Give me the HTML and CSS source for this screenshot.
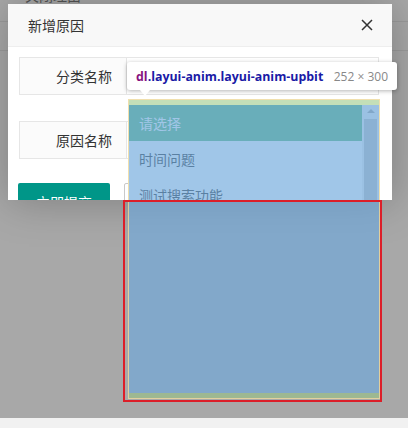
FILE: index.html
```html
<!DOCTYPE html>
<html lang="zh">
<head>
<meta charset="utf-8">
<title>新增原因</title>
<link rel="stylesheet" href="styles.css">
</head>
<body>
<div class="screen">
  <div class="page">
    <div class="bg-row bg-head"><span class="bg-text">关闭理由</span></div>
    <div class="bg-row"></div>
  </div>
  <div class="footer"></div>

  <div class="dialog">
    <div class="dialog-title">
      <span>新增原因</span>
      <svg class="close" viewBox="0 0 12 12" width="12" height="12"><path d="M1 1 L11 11 M11 1 L1 11" stroke="#333" stroke-width="1.5" fill="none"/></svg>
    </div>
    <div class="dialog-body">
      <div class="form-item">
        <label class="form-label">分类名称</label>
        <div class="form-input"></div>
      </div>
      <div class="form-item">
        <label class="form-label">原因名称</label>
        <div class="form-input"></div>
      </div>
      <div class="form-actions">
        <button class="btn btn-primary">立即提交</button>
        <button class="btn btn-default">重置</button>
      </div>
    </div>
    <dl class="select-list">
      <div class="options">
        <dd class="this">请选择</dd>
        <dd>时间问题</dd>
        <dd>测试搜索功能</dd>
        <dd>其他</dd>
      </div>
      <div class="scrollbar">
        <div class="scroll-up"></div>
        <div class="scroll-thumb"></div>
      </div>
    </dl>
  </div>

  <div class="inspect-box">
    <div class="inspect-pad"></div>
    <div class="inspect-content"></div>
    <div class="inspect-pad"></div>
  </div>
  <div class="inspect-tip">
    <span class="tip-sel"><span class="tip-tag">dl</span>.layui-anim.layui-anim-upbit</span>
    <span class="tip-size">252 × 300</span>
  </div>
  <div class="red-box"></div>
</div>
</body>
</html>
```

FILE: styles.css
```css
html, body {
  margin: 0;
  padding: 0;
}
body {
  font-family: "Noto Sans CJK SC", "Noto Sans", sans-serif;
  font-size: 14px;
  color: #333;
}
.screen {
  position: relative;
  width: 408px;
  height: 428px;
  overflow: hidden;
  background: #a8a8a8;
}
.page {
  height: 418px;
  overflow: hidden;
}
.bg-row {
  height: 28px;
  border-bottom: 1px solid #9b9b9b;
}
.bg-head {
  margin-top: -15px;
  height: 36px;
}
.bg-text {
  display: block;
  padding-left: 25px;
  line-height: 20px;
  color: #555;
}
.footer {
  height: 10px;
  background: #f1f1f1;
}

.dialog {
  position: absolute;
  left: 8px;
  top: 4px;
  width: 384px;
  height: 196px;
  background: #fff;
  overflow: hidden;
  box-shadow: 1px 1px 40px rgba(0, 0, 0, 0.25);
}
.dialog-title {
  height: 42px;
  padding: 0 19px 0 20px;
  background: #f8f8f8;
  border-bottom: 1px solid #eee;
  display: flex;
  align-items: center;
  justify-content: space-between;
  font-size: 14px;
  color: #333;
}
.close {
  display: block;
}
.dialog-body {
  padding: 10px 13px 0 11px;
}
.form-item {
  display: flex;
  height: 38px;
}
.form-item + .form-item {
  margin-top: 26px;
}
.form-label {
  box-sizing: border-box;
  width: 108px;
  height: 38px;
  border: 1px solid #e6e6e6;
  background: #fbfbfb;
  padding-right: 14px;
  text-align: right;
  line-height: 36px;
  color: #333;
}
.form-input {
  box-sizing: border-box;
  width: 252px;
  height: 38px;
  border: 1px solid #e6e6e6;
  border-left: 0;
  background: #fff;
}
.form-actions {
  display: flex;
  gap: 14px;
  margin-top: 24px;
  margin-left: -1px;
}
.btn {
  height: 38px;
  border-radius: 2px;
  font-family: inherit;
  font-size: 14px;
  padding: 0;
}
.btn-primary {
  width: 92px;
  border: 0;
  background: #009688;
  color: #fff;
}
.btn-default {
  width: 60px;
  border: 1px solid #c9c9c9;
  background: #fff;
  color: #555;
}

.select-list {
  position: absolute;
  left: 120px;
  top: 95px;
  width: 252px;
  height: 300px;
  box-sizing: border-box;
  margin: 0;
  padding: 5px 0;
  border: 1px solid #d2d2d2;
  background: #fff;
  display: flex;
  overflow: hidden;
}
.options {
  flex: 1;
}
.options dd {
  margin: 0;
  padding: 0 10px;
  line-height: 36px;
  color: #333;
  white-space: nowrap;
}
.options dd.this {
  background: #5fb878;
  color: #fff;
}
.scrollbar {
  width: 17px;
  background: #f1f1f1;
  display: flex;
  flex-direction: column;
}
.scroll-up {
  height: 14px;
  position: relative;
}
.scroll-up::after {
  content: "";
  position: absolute;
  left: 5px;
  top: 4px;
  border-left: 4px solid transparent;
  border-right: 4px solid transparent;
  border-bottom: 4px solid #a3a3a3;
}
.scroll-thumb {
  margin: 0 2px;
  height: 200px;
  background: #c1c1c1;
}

.inspect-box {
  position: absolute;
  left: 128px;
  top: 99px;
  width: 252px;
  height: 300px;
  box-sizing: border-box;
  border: 1px solid rgba(255, 229, 153, 0.66);
  display: flex;
  flex-direction: column;
}
.inspect-pad {
  height: 5px;
  background: rgba(147, 196, 125, 0.55);
}
.inspect-content {
  flex: 1;
  background: rgba(111, 168, 220, 0.66);
}

.inspect-tip {
  position: absolute;
  left: 127px;
  top: 62px;
  width: 270px;
  height: 28px;
  box-sizing: border-box;
  padding: 0 9px 0 9px;
  background: #fff;
  border-radius: 3px;
  box-shadow: 0 1px 4px rgba(0, 0, 0, 0.3);
  display: flex;
  align-items: center;
  justify-content: space-between;
  font-family: "Open Sans", "Noto Sans", sans-serif;
  font-size: 12px;
  white-space: nowrap;
}
.inspect-tip::after {
  content: "";
  position: absolute;
  left: 13px;
  top: 100%;
  border-left: 5px solid transparent;
  border-right: 5px solid transparent;
  border-top: 6px solid #fff;
}
.tip-sel {
  font-weight: 700;
  font-size: 12.4px;
  color: #1a1aa6;
}
.tip-tag {
  color: #881280;
}
.tip-size {
  color: #888;
}

.red-box {
  position: absolute;
  left: 123px;
  top: 200px;
  width: 259px;
  height: 202px;
  box-sizing: border-box;
  border: 2px solid #dc1e28;
}
```
